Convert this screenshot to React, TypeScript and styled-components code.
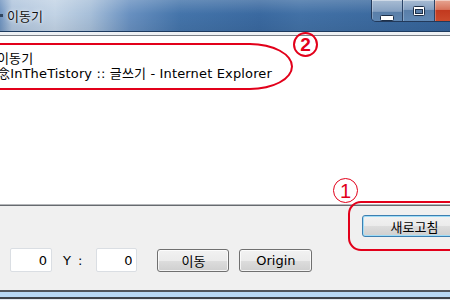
import React from 'react'
import styled, { createGlobalStyle } from 'styled-components'

const RED = '#e2001a'
const UI_FONT = `"DejaVu Sans", "Noto Sans CJK KR", sans-serif`

const GlobalStyle = createGlobalStyle`
  html, body {
    margin: 0;
    padding: 0;
    width: 450px;
    height: 300px;
    overflow: hidden;
    background: #f0f0f0;
  }
  #root {
    width: 450px;
    height: 300px;
  }
`

const Window = styled.div`
  position: relative;
  width: 450px;
  height: 300px;
  overflow: hidden;
  display: flex;
  flex-direction: column;
  background: #f0f0f0;
  font-family: ${UI_FONT};
`

const TitleBar = styled.div`
  height: 31px;
  flex-shrink: 0;
  display: flex;
  align-items: flex-start;
  border-bottom: 1px solid #1c3a5f;
  background:
    linear-gradient(to bottom, rgba(255, 255, 255, 0.18), rgba(255, 255, 255, 0) 45%, rgba(0, 0, 0, 0.06)),
    linear-gradient(to right, #6f93bf 0, #afc4dc 12px, #c2d3e5 55px, #a7bfd9 90px, #6890c0 130px, #4474aa 180px, #3a69a0 260px, #4271a6 300px, #356399 450px);
`

const TitleIcon = styled.span`
  width: 3px;
  height: 3px;
  margin-top: 14px;
  background: #2f4560;
`

const TitleText = styled.span`
  margin: 9px 0 0 4px;
  font-size: 13px;
  line-height: 16px;
  color: #111;
  text-shadow: 0 0 5px rgba(255, 255, 255, 0.9), 0 0 2px rgba(255, 255, 255, 0.7);
`

const CaptionGroup = styled.div`
  margin-left: auto;
  margin-right: -29px;
  display: flex;
  height: 22px;
  box-sizing: border-box;
  border: 1px solid #22395a;
  border-top: none;
  border-bottom-left-radius: 5px;
  overflow: hidden;
`

const CaptionButton = styled.div<{ $kind: 'min' | 'max' | 'close' }>`
  width: ${({ $kind }) => ($kind === 'min' ? 30 : $kind === 'max' ? 31 : 43)}px;
  height: 100%;
  display: flex;
  justify-content: center;
  align-items: ${({ $kind }) => ($kind === 'min' ? 'flex-end' : 'center')};
  padding-bottom: ${({ $kind }) => ($kind === 'min' ? 4 : 0)}px;
  box-sizing: content-box;
  border-right: ${({ $kind }) => ($kind === 'close' ? 'none' : '1px solid #2a4366')};
  box-shadow: inset 0 1px 0 rgba(255, 255, 255, 0.45), inset 1px 0 0 rgba(255, 255, 255, 0.25);
  background: ${({ $kind }) =>
    $kind === 'close'
      ? 'linear-gradient(to bottom, #e7a592 0%, #d7745c 45%, #c2391f 50%, #cb4a2b 100%)'
      : 'linear-gradient(to bottom, #a9bdd4 0%, #85a0c1 45%, #5a7fa9 50%, #6088b4 100%)'};
`

const FrameStrip = styled.div`
  height: 3px;
  flex-shrink: 0;
  background: #eef1f4;
`

const EditBox = styled.div`
  flex: 1;
  background: #fff;
  border-top: 1px solid #7a7f86;
  border-bottom: 1px solid #666a6f;
  box-shadow: inset 0 -1px 0 #b4b6b9;
  overflow: hidden;
`

const EditText = styled.div`
  margin-left: -3px;
  padding-top: 15px;
  font-size: 13px;
  line-height: 15px;
  letter-spacing: 0.15px;
  color: #000;
  white-space: pre;
`

const ControlPanel = styled.div`
  height: 84px;
  flex-shrink: 0;
  box-sizing: border-box;
  padding-top: 9px;
  display: flex;
  flex-direction: column;
  gap: 11px;
`

const RefreshRow = styled.div`
  height: 22px;
  display: flex;
  justify-content: flex-end;
  margin-right: -17px;
`

const CoordRow = styled.div`
  height: 24px;
  display: flex;
  align-items: center;
  padding-left: 10px;
`

const Field = styled.input<{ $width: number; $ml?: number }>`
  width: ${({ $width }) => $width}px;
  height: 24px;
  margin: 0 0 0 ${({ $ml }) => $ml ?? 0}px;
  box-sizing: border-box;
  padding: 0 4px 0 0;
  border: 1px solid #dadee3;
  border-radius: 2px;
  background: #fff;
  text-align: right;
  font-family: ${UI_FONT};
  font-size: 13px;
  color: #000;
  outline: none;
`

const Label = styled.span<{ $ml?: number }>`
  margin-left: ${({ $ml }) => $ml ?? 0}px;
  font-size: 13px;
  word-spacing: 3px;
  color: #000;
`

const PushButton = styled.button<{ $width: number; $ml?: number; $primary?: boolean }>`
  width: ${({ $width }) => $width}px;
  height: ${({ $primary }) => ($primary ? 22 : 23)}px;
  margin-left: ${({ $ml }) => $ml ?? 0}px;
  padding: 0;
  box-sizing: border-box;
  border: 1px solid ${({ $primary }) => ($primary ? '#3c7fb1' : '#707070')};
  border-radius: 3px;
  background: linear-gradient(to bottom, #f2f2f2 0%, #ebebeb 50%, #dddddd 51%, #cfcfcf 100%);
  box-shadow: inset 0 0 0 1px ${({ $primary }) => ($primary ? '#9fdcf7' : 'rgba(255, 255, 255, 0.75)')};
  font-family: ${UI_FONT};
  font-size: 13px;
  color: #000;
`

const BottomEdge = styled.div`
  height: 10px;
  flex-shrink: 0;
  background: linear-gradient(
    to bottom,
    #50555b 0 2px,
    #b8d8f3 2px 7px,
    #3e4349 7px 9px,
    #e4e8ec 9px 10px
  );
`

// red callouts drawn over the screenshot
const Outline = styled.div<{ $x: number; $y: number; $w: number; $h: number; $radius: string }>`
  position: absolute;
  left: ${({ $x }) => $x}px;
  top: ${({ $y }) => $y}px;
  width: ${({ $w }) => $w}px;
  height: ${({ $h }) => $h}px;
  box-sizing: border-box;
  border: 2px solid ${RED};
  border-radius: ${({ $radius }) => $radius};
  pointer-events: none;
`

const Badge = styled.div<{ $x: number; $y: number; $stroke: number; $bold?: boolean }>`
  position: absolute;
  left: ${({ $x }) => $x}px;
  top: ${({ $y }) => $y}px;
  width: 25px;
  height: 25px;
  box-sizing: border-box;
  border: ${({ $stroke }) => $stroke}px solid ${RED};
  border-radius: 50%;
  display: flex;
  align-items: center;
  justify-content: center;
  font-family: "Liberation Sans", sans-serif;
  font-size: ${({ $bold }) => ($bold ? 19 : 20)}px;
  font-weight: ${({ $bold }) => ($bold ? 700 : 400)};
  color: ${RED};
  line-height: 1;
`

export default function App() {
  return (
    <>
      <GlobalStyle />
      <Window>
        <TitleBar>
          <TitleIcon />
          <TitleText>이동기</TitleText>
          <CaptionGroup>
            <CaptionButton $kind="min">
              <svg width="14" height="6" viewBox="0 0 14 6">
                <rect x="0.5" y="0.5" width="13" height="5" rx="1" fill="#fff" stroke="#1d2f48" />
              </svg>
            </CaptionButton>
            <CaptionButton $kind="max">
              <svg width="12" height="10" viewBox="0 0 12 10">
                <rect x="0.5" y="0.5" width="11" height="9" rx="1" fill="#fff" stroke="#1d2f48" />
                <rect x="2.5" y="3.5" width="7" height="4" fill="#5a7ea8" stroke="#1d2f48" />
              </svg>
            </CaptionButton>
            <CaptionButton $kind="close" />
          </CaptionGroup>
        </TitleBar>
        <FrameStrip />
        <EditBox>
          <EditText>
            {'이동기\n念InTheTistory :: 글쓰기 - Internet Explorer'}
          </EditText>
        </EditBox>
        <ControlPanel>
          <RefreshRow>
            <PushButton $width={105} $primary>새로고침</PushButton>
          </RefreshRow>
          <CoordRow>
            <Field $width={42} value="0" readOnly />
            <Label $ml={11}>Y :</Label>
            <Field $width={41} $ml={14} value="0" readOnly />
            <PushButton $width={72} $ml={20}>이동</PushButton>
            <PushButton $width={73} $ml={10}>Origin</PushButton>
          </CoordRow>
        </ControlPanel>
        <BottomEdge />

        <Outline $x={-40} $y={43} $w={333} $h={47} $radius="44px / 24px" />
        <Badge $x={293} $y={32} $stroke={2.5} $bold>2</Badge>
        <Outline $x={348} $y={201} $w={130} $h={50} $radius="13px" />
        <Badge $x={333} $y={178} $stroke={1.5}>1</Badge>
      </Window>
    </>
  )
}
